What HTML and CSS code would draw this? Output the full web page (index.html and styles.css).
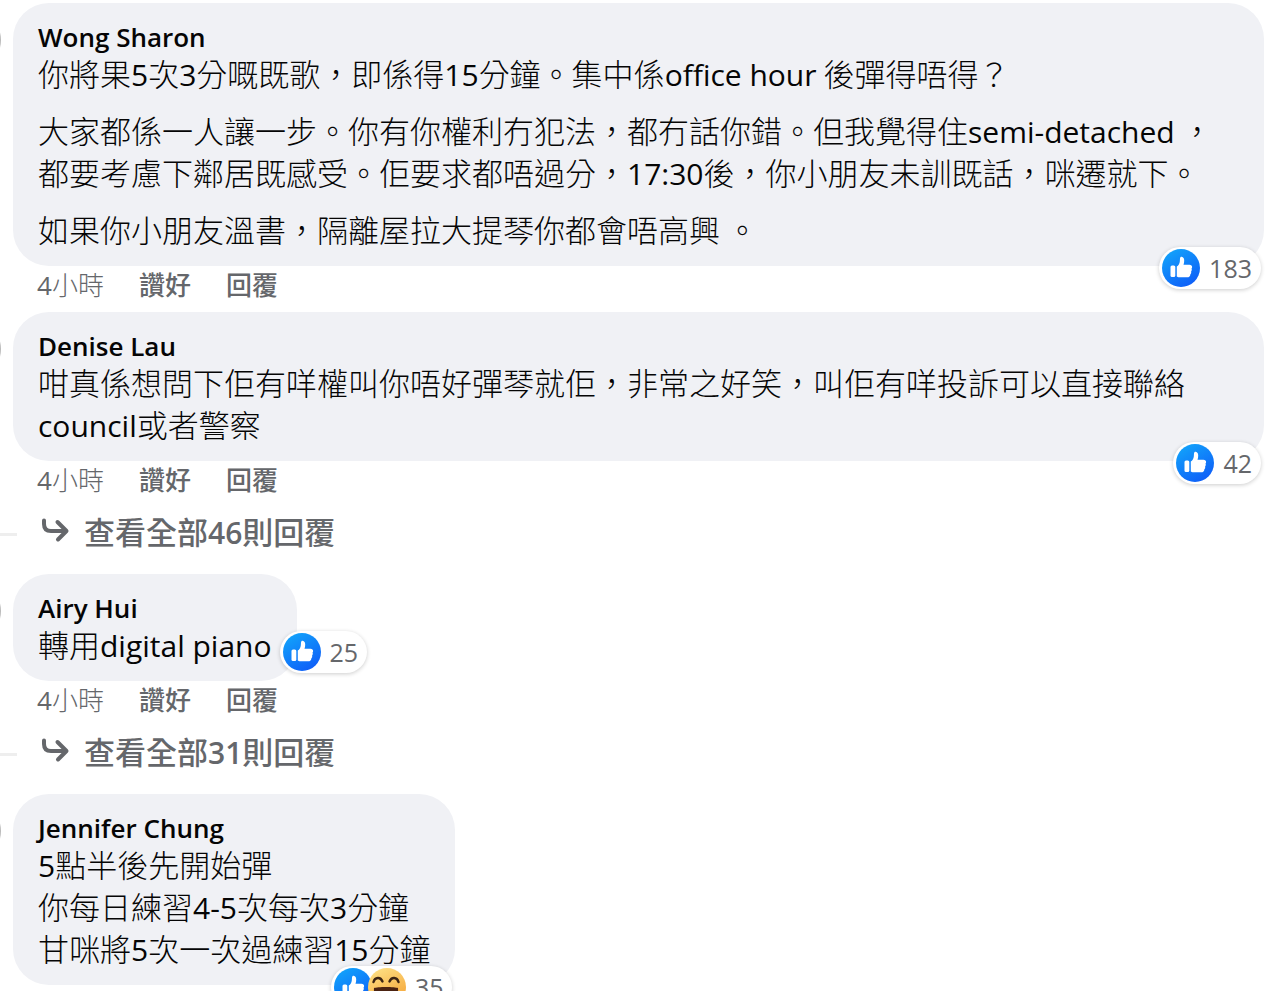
FILE: index.html
```html
<!DOCTYPE html>
<html lang="zh-Hant">
<head>
  <meta charset="UTF-8">
  <meta name="viewport" content="width=device-width, initial-scale=1.0">
  <title>Comments</title>
  <link rel="stylesheet" href="styles.css">
</head>
<body>
  <!-- Shared icons -->
  <svg class="sprite" width="0" height="0" aria-hidden="true">
    <defs>
      <linearGradient id="blue" x1="0" y1="0" x2="0.6" y2="1">
        <stop offset="0" stop-color="#12aafb"/>
        <stop offset="1" stop-color="#0f62f8"/>
      </linearGradient>
      <linearGradient id="yellow" x1="0" y1="0" x2="0.5" y2="1">
        <stop offset="0" stop-color="#ffe58a"/>
        <stop offset="1" stop-color="#f5a73c"/>
      </linearGradient>
    </defs>
    <symbol id="like" viewBox="0 0 38 38">
      <circle cx="19" cy="19" r="19" fill="url(#blue)"/>
      <rect x="8.500" y="16.500" width="4.800" height="11.500" rx="1.500" fill="#fff"/>
      <path d="M14.800 17.600c1.600-1.200 2.800-2.900 3-5.200l.2-3c.1-1.200.8-1.800 1.700-1.700 1.700.2 2.500 1.800 2.500 3.700 0 1.700-.2 3-.7 4.300h6c1.600 0 2.600 1 2.600 2.200 0 .7-.2 1.200-.6 1.600.5 1 .4 2.200-.4 3 .3 1.200 0 2.200-.8 2.900 0 1.800-1.100 2.900-3.200 2.900h-6.700c-1.500 0-2.700-.3-3.600-.9z" fill="#fff"/>
    </symbol>
    <symbol id="haha" viewBox="0 0 38 38">
      <circle cx="19" cy="19" r="19" fill="url(#yellow)"/>
      <path d="M5.500 14c1.500-5 7-5.500 9-.5M21.500 13.500c2-5 7.500-4.500 9 .5" fill="none" stroke="#3c2413" stroke-width="2.400" stroke-linecap="round"/>
      <path d="M6 20c3-1.500 21-1.500 24 0 .8 8-4 13.500-12 13.500S5.200 28 6 20z" fill="#4b2312"/>
      <path d="M10 28.500c3.500-4 12.500-4 16 0-3.500 6-12.500 6-16 0z" fill="#f0425d"/>
    </symbol>
    <symbol id="reply" viewBox="0 0 30 26">
      <path d="M4 3.500v3.500q0 7 7 7h14.500M17.500 5l9 9-8.500 8.500" fill="none" stroke="#65676b" stroke-width="4" stroke-linecap="round" stroke-linejoin="round"/>
    </symbol>
  </svg>

  <main class="comments">
    <article class="comment">
      <div class="bubble wide">
        <h2 class="name">Wong Sharon</h2>
        <p>你將果<span class="latin">5</span>次<span class="latin">3</span>分嘅既歌，即係得<span class="latin">15</span>分鐘。集中係<span class="latin">office hour</span> 後彈得唔得？</p>
        <p>大家都係一人讓一步。你有你權利冇犯法，都冇話你錯。但我覺得住<span class="latin">semi-detached</span> ，<br>都要考慮下鄰居既感受。佢要求都唔過分，<span class="latin">17:30</span>後，你小朋友未訓既話，咪遷就下。</p>
        <p>如果你小朋友溫書，隔離屋拉大提琴你都會唔高興 。</p>
        <button type="button" class="reactions"><svg class="icon"><use href="#like"/></svg><span class="count">183</span></button>
      </div>
      <div class="actions">
        <span class="time"><span class="latin">4</span>小時</span>
        <button type="button">讚好</button>
        <button type="button">回覆</button>
      </div>
    </article>

    <article class="comment">
      <div class="bubble wide">
        <h2 class="name">Denise Lau</h2>
        <p>咁真係想問下佢有咩權叫你唔好彈琴就佢，非常之好笑，叫佢有咩投訴可以直接聯絡<span class="latin">council</span>或者警察</p>
        <button type="button" class="reactions"><svg class="icon"><use href="#like"/></svg><span class="count">42</span></button>
      </div>
      <div class="actions">
        <span class="time"><span class="latin">4</span>小時</span>
        <button type="button">讚好</button>
        <button type="button">回覆</button>
      </div>
      <button type="button" class="more"><svg class="arrow"><use href="#reply"/></svg><span>查看全部<span class="latin">46</span>則回覆</span></button>
    </article>

    <article class="comment">
      <div class="bubble">
        <h2 class="name">Airy Hui</h2>
        <p>轉用<span class="latin">digital piano</span></p>
        <button type="button" class="reactions beside"><svg class="icon"><use href="#like"/></svg><span class="count">25</span></button>
      </div>
      <div class="actions">
        <span class="time"><span class="latin">4</span>小時</span>
        <button type="button">讚好</button>
        <button type="button">回覆</button>
      </div>
      <button type="button" class="more"><svg class="arrow"><use href="#reply"/></svg><span>查看全部<span class="latin">31</span>則回覆</span></button>
    </article>

    <article class="comment">
      <div class="bubble">
        <h2 class="name">Jennifer Chung</h2>
        <p><span class="latin">5</span>點半後先開始彈<br>你每日練習<span class="latin">4-5</span>次每次<span class="latin">3</span>分鐘<br>甘咪將<span class="latin">5</span>次一次過練習<span class="latin">15</span>分鐘</p>
        <button type="button" class="reactions"><svg class="icon"><use href="#like"/></svg><svg class="icon second"><use href="#haha"/></svg><span class="count">35</span></button>
      </div>
    </article>
  </main>
</body>
</html>
```
FILE: styles.css
```css
body {
  margin: 0;
  background-color: #fff;
  color: #050505;
  font-family: "Noto Sans CJK TC", sans-serif;
  font-size: 31px;
  font-weight: 300;
}

.sprite {
  position: absolute;
}

.comments {
  display: flex;
  flex-direction: column;
  gap: 6px;
  padding: 3px 16px 6px 13px;
  overflow: hidden;
}

.comment {
  position: relative;
}

/* edge of the avatar, cut off by the side of the page */
.comment::before {
  content: "";
  position: absolute;
  top: 9px;
  left: -68px;
  width: 56px;
  height: 56px;
  border-radius: 50%;
  background-color: #bbb;
}

.bubble {
  position: relative;
  box-sizing: border-box;
  width: fit-content;
  max-width: 100%;
  padding: 20px 25px 16px;
  border-radius: 36px;
  background-color: #f0f1f5;
}

.bubble.wide {
  width: auto;
}

.name {
  margin: 0;
  font-family: "Open Sans", sans-serif;
  font-size: 26px;
  font-weight: 600;
  line-height: 29px;
}

.bubble p {
  margin: 0;
  line-height: 42px;
}

.bubble p + p {
  margin-top: 15px;
}

.latin {
  font-family: "Open Sans", sans-serif;
  font-size: 30px;
  font-weight: 400;
  line-height: 1;
}

button {
  padding: 0;
  border: none;
  background: none;
  color: inherit;
  font: inherit;
  cursor: pointer;
}

.reactions {
  position: absolute;
  right: 3px;
  bottom: -23px;
  display: flex;
  align-items: center;
  padding: 2px 9px 2px 3px;
  border-radius: 21px;
  background-color: #fff;
  box-shadow: 0 1px 4px rgba(0, 0, 0, 0.2);
}

.reactions.beside {
  right: auto;
  bottom: 8px;
  left: calc(100% - 17px);
}

.icon {
  width: 38px;
  height: 38px;
}

.icon.second {
  margin-left: -4px;
}

.count {
  margin-left: 9px;
  color: #65676b;
  font-family: "Open Sans", sans-serif;
  font-size: 25px;
  font-weight: 400;
  line-height: 38px;
}

.actions {
  display: flex;
  align-items: center;
  gap: 35px;
  height: 36px;
  padding-left: 24px;
  padding-bottom: 4px;
  color: #65676b;
  font-size: 26px;
  line-height: 36px;
}

.actions .latin {
  font-size: 26px;
}

.actions button {
  font-weight: 500;
}

.more {
  position: relative;
  display: flex;
  align-items: center;
  gap: 14px;
  height: 58px;
  margin-bottom: 9px;
  padding-left: 27px;
  color: #65676b;
  font-weight: 500;
}

.more .latin {
  font-weight: 600;
}

/* thread line coming in from the left */
.more::before {
  content: "";
  position: absolute;
  top: 32px;
  left: -13px;
  width: 17px;
  height: 3px;
  background-color: #eee;
}

.arrow {
  width: 30px;
  height: 26px;
}
```
